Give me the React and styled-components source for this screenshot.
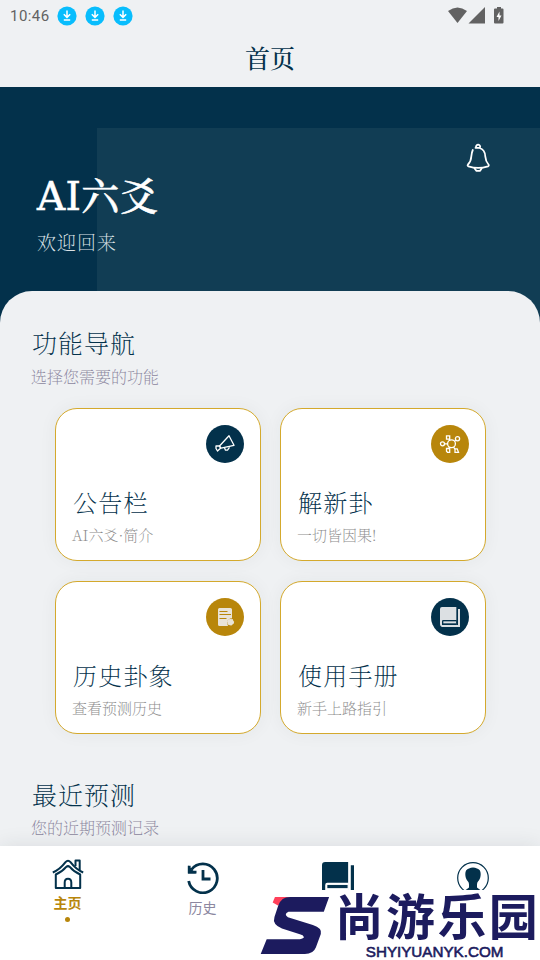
import React from "react";
import styled, { createGlobalStyle } from "styled-components";

const NAVY = "#03314b";
const GOLD = "#b8860b";

const GlobalStyle = createGlobalStyle`
  * {
    box-sizing: border-box;
  }

  body {
    margin: 0;
    background: #eff1f3;
    overflow: hidden;
  }
`;

const Screen = styled.div`
  position: relative;
  display: flex;
  flex-direction: column;
  width: 540px;
  height: 960px;
  overflow: hidden;
  background: #eff1f3;
  font-family: "Noto Serif CJK SC", "Noto Sans CJK SC", sans-serif;
  font-weight: 200;
  white-space: nowrap;
`;

const StatusBar = styled.div`
  display: flex;
  flex-shrink: 0;
  align-items: center;
  justify-content: space-between;
  height: 31px;
  padding: 0 34px 0 10px;
  color: #626262;
`;

const StatusGroup = styled.div`
  display: flex;
  align-items: center;
  gap: ${(props) => props.$gap}px;
`;

const Time = styled.span`
  width: 39px;
  font: 400 15px/18px Roboto, sans-serif;
  letter-spacing: 0.45px;
`;

const TitleBar = styled.header`
  flex-shrink: 0;
  height: 56px;
  color: ${NAVY};
  font-size: 25px;
  font-weight: 500;
  line-height: 52px;
  text-align: center;
`;

const Hero = styled.section`
  display: flex;
  flex-shrink: 0;
  height: 240px;
  padding: 41px 0 0 97px;
  background: ${NAVY};
`;

const HeroShade = styled.div`
  display: flex;
  flex: 1;
  justify-content: space-between;
  padding: 15px 48px 0 0;
  background: #113d54;
`;

const Welcome = styled.div`
  margin: 25px 0 0 -60px;
  color: #fff;
`;

const AppName = styled.h1`
  margin: 0;
  font-size: 38px;
  font-weight: 500;
  line-height: 52px;
  letter-spacing: 1px;
  -webkit-text-stroke: 0.6px #fff;
`;

const AppNameLatin = styled.span`
  font-family: "DejaVu Serif", serif;
  font-size: 39px;
  letter-spacing: 0.3px;
`;

const Greeting = styled.p`
  margin: 5px 0 0;
  color: #dbe2e6;
  font-size: 19px;
  line-height: 28px;
  letter-spacing: 1px;
`;

const Content = styled.main`
  flex: 1;
  min-height: 0;
  margin-top: -36px;
  padding-top: 33px;
  overflow: hidden;
  border-radius: 32px 32px 0 0;
  background: #eff1f3;
`;

const SectionHead = styled.div`
  padding-left: 32px;
`;

const SectionTitle = styled.h2`
  margin: 0;
  color: ${NAVY};
  font-size: 25px;
  font-weight: 200;
  line-height: 36px;
  letter-spacing: 1px;
`;

const SectionHint = styled.p`
  margin: ${(props) => (props.$tight ? 4 : 5)}px 0 0 -1px;
  color: #8c87a0;
  font-size: 16px;
  line-height: 24px;
`;

const CardGrid = styled.div`
  display: grid;
  grid-template-columns: 206px 206px;
  grid-auto-rows: 153px;
  gap: 20px 19px;
  padding: 19px 0 42px 55px;
`;

const Card = styled.article`
  display: flex;
  flex-direction: column;
  padding: 16px 16px 8px;
  border: 1px solid #d4a92d;
  border-radius: 22px;
  background: #fff;
  box-shadow: 0 0 18px rgba(40, 50, 60, 0.05);
`;

const Badge = styled.div`
  display: flex;
  align-items: center;
  justify-content: center;
  align-self: flex-end;
  width: 38px;
  height: 38px;
  border-radius: 50%;
  background: ${(props) => props.$color};
`;

const CardTitle = styled.h3`
  margin: 21px 0 0 1px;
  color: ${NAVY};
  font-size: 24px;
  font-weight: 200;
  line-height: 36px;
  letter-spacing: 1.2px;
`;

const CardHint = styled.p`
  margin: 3px 0 0;
  color: #8c8c8c;
  font-size: 15px;
  line-height: 23px;
`;

const TabBar = styled.nav`
  display: grid;
  flex-shrink: 0;
  grid-template-columns: repeat(4, 1fr);
  height: 114px;
  background: #fff;
  box-shadow: 0 0 20px rgba(30, 40, 50, 0.1);
  z-index: 1;
`;

const Tab = styled.div`
  display: flex;
  flex-direction: column;
  align-items: center;
  padding-top: ${(props) => (props.$active ? 13 : 16)}px;
  color: ${(props) => (props.$active ? GOLD : "#8c87a0")};
  font: ${(props) => (props.$active ? 700 : 400)} 14px/20px "Noto Sans CJK SC",
    sans-serif;
`;

const TabLabel = styled.span`
  margin-top: ${(props) => (props.$active ? 1 : 3)}px;
`;

const ActiveDot = styled.i`
  width: 5px;
  height: 5px;
  margin-top: 5px;
  border-radius: 50%;
  background: ${GOLD};
`;

/* site mark lying over the right half of the tab bar */
const SiteMark = styled.aside`
  position: absolute;
  right: 0;
  bottom: 0;
  z-index: 2;
  display: flex;
  width: 280px;
  height: 70px;
  background: #fff;
  color: #1c1b5e;
`;

const SiteText = styled.div`
  display: flex;
  flex-direction: column;
  margin-left: 5px;
`;

const SiteName = styled.strong`
  height: 53px;
  font: 700 49px/47px "Noto Sans CJK SC", sans-serif;
  letter-spacing: 2.3px;
`;

const SiteUrl = styled.span`
  margin-left: 31px;
  font: 400 15.2px/17px "Liberation Sans", sans-serif;
  -webkit-text-stroke: 0.6px #1c1b5e;
`;

const DownloadIcon = () => (
  <svg width="20" height="20" viewBox="0 0 20 20">
    <circle cx="10" cy="10" r="9.6" fill="#08bdfd" />
    <path d="M10 4.5v6M6.8 8.2l3.2 3.2 3.2-3.2M6.8 14h6.4" fill="none" stroke="#fff" strokeWidth="1.5" />
  </svg>
);

const SignalIcons = () => (
  <svg width="58" height="18" viewBox="0 0 58 18" fill="currentColor">
    <path d="M0 4Q9.500-3 19 4L9.500 16Z" />
    <path d="M37 0v16.500H20.500Z" />
    <path d="M49 0h4v1.500h1.500q1 0 1 1V15.500q0 1-1 1h-7.500q-1 0-1-1V2.500q0-1 1-1h2Z" />
    <path d="M51.500 4.500 48.500 10h2v4l3-5.500h-2Z" fill="#fff" />
  </svg>
);

const BellIcon = () => (
  <svg width="28" height="30" viewBox="0 0 28 30" fill="none" stroke="#fff" strokeWidth="1.8" strokeLinejoin="round" strokeLinecap="round">
    <path d="M8.800 7Q7.800 9 7.300 13.500 7 18.500 4 21.500q-1 1.300.5 1.900Q14 26.500 24 23.400q1.300-.6.500-1.900Q21.700 18.500 21.300 13.500 21 6.500 15.500 5M11.500 4.800h4.500" />
    <path d="M12 3.800a2.100 2.100 0 1 1 4.200 0M10.500 25.200l1.800 2.600h3.800l1.600-2.600" />
  </svg>
);

const MegaphoneIcon = () => (
  <svg width="22" height="20" viewBox="0 0 22 20" fill="none" stroke="#fff" strokeWidth="1.300" strokeLinejoin="round">
    <path d="M5.500 12 15 1.800l5 9.500-13 2.900Z" />
    <path d="M2 12h3.500l1 2.200-3 2.800-1.500-2.500ZM10.500 13.800l1 2.400h2l2-2.900" />
  </svg>
);

const NodesIcon = () => (
  <svg width="22" height="20" viewBox="0 0 22 20" fill="none" stroke="#fff" strokeWidth="1.300">
    <circle cx="12.500" cy="9.800" r="3.900" />
    <circle cx="3.500" cy="9.800" r="2" />
    <path d="M7.500 1.800h3.200v3.300H7.500ZM7.500 14.500h3.200v3.800H8.500l-1-1ZM16 14.800h2.200l1.300 3.500h-3.500Z" />
    <circle cx="18.500" cy="4.800" r="2.100" />
    <path d="M5.500 9.800h3M10.200 5.100l.6 1.400M15.500 7.200l1.500-1M10.500 13l-.6 1.500M14.500 13.200l1.500 2" />
  </svg>
);

const RecordIcon = () => (
  <svg width="20" height="20" viewBox="0 0 20 20">
    <path d="M3 2.500q0-1.500 1.500-1.500h11q1.500 0 1.500 1.500V11q-4.500.5-5 4.500l1 3.500H4.500q-1.500 0-1.500-1.500Z" fill="#e9e3d8" />
    <path d="M4.500 4.500h8M4.500 7.500H16M4.500 11.500h7" stroke={GOLD} strokeWidth="1.100" />
    <circle cx="15.500" cy="15" r="3.100" fill="#e9e3d8" stroke="#e9e3d8" strokeDasharray="2 1" />
  </svg>
);

const BookIcon = ({ size, color, gap }) => (
  <svg width={size} height={size} viewBox="0 0 30 30" fill={color}>
    <path d="M3 0H24.500V27H27V3H30V30H3Q0 29 0 26V3Q0 0 3 0Z" />
    <path d="M5 19.500H25V27H3V21.500Q3 19.500 5 19.500Z" fill={gap} />
    <path d="M5 21.500H24V24.500H5Z" />
  </svg>
);

const HomeIcon = () => (
  <svg width="32" height="32" viewBox="0 0 32 32" fill="none" stroke={NAVY} strokeWidth="2" strokeLinejoin="round">
    <path d="M.8 13.500Q8 10.500 13.500 3.200q2.500-2.800 5 0Q24 10.500 31.200 13.500" />
    <path d="M3.800 15.500Q10.500 12.500 14.200 7.900q1.800-1.600 3.600 0Q21.500 12.500 28.200 15.500V29H3.800Z" />
    <path d="M12.700 28.500V23.500q0-3.700 3.300-3.700t3.300 3.700v5M23.500 7V1.500h4.200V11" />
  </svg>
);

const HistoryIcon = () => (
  <svg width="32" height="32" viewBox="0 0 32 32" fill="none" stroke={NAVY} strokeWidth="2.800">
    <path d="M1.700 19A14.400 14.400 0 1 0 4.500 7.500" />
    <path d="M2.200 3.700V10.200H9.500M16 8V17H23.500" />
    <path d="M1 3.500v8h8Z" fill={NAVY} stroke="none" />
  </svg>
);

const ProfileIcon = () => (
  <svg width="32" height="32" viewBox="0 0 32 32">
    <circle cx="16" cy="16" r="15.300" fill="#fff" stroke={NAVY} strokeWidth="1.200" />
    <path d="M12 6.500q4-2 8 0 3.700.8 3.700 5.500 0 5-2.700 7.500-1 1-1 3v3l4 3q-8 3.500-16 0l4-3v-3q0-2-1-3-2.700-2.500-2.700-7.500 0-4.700 3.700-5.500Z" fill={NAVY} />
  </svg>
);

const SiteLogo = () => (
  <svg width="70" height="70" viewBox="0 0 70 70">
    <path d="M15 7H30L18 15.500 12.700 12.500Z" fill="#ff405a" />
    <path d="M30 7H69.300L64 21.700H28.500Q23.500 24 28 27.300L53 35Q62.500 38 61 44L56 57.500Q53.500 64 45 64H.7L6.700 49.300H40Q44 48.500 44 47 43.500 45 40 44.300L22 38.500Q12 34.500 14.500 27L18.300 15.500Q21.500 7 30 7Z" fill="#1c1b5e" />
  </svg>
);

const cards = [
  { title: "公告栏", hint: "AI六爻·简介", color: NAVY, icon: <MegaphoneIcon /> },
  { title: "解新卦", hint: "一切皆因果!", color: GOLD, icon: <NodesIcon /> },
  { title: "历史卦象", hint: "查看预测历史", color: GOLD, icon: <RecordIcon /> },
  {
    title: "使用手册",
    hint: "新手上路指引",
    color: NAVY,
    icon: <BookIcon size={20} color="#dce0e3" gap={NAVY} />,
  },
];

const tabs = [
  { label: "主页", icon: <HomeIcon />, active: true },
  { label: "历史", icon: <HistoryIcon /> },
  { icon: <BookIcon size={32} color={NAVY} gap="#fff" /> },
  { icon: <ProfileIcon /> },
];

const App = () => {
  return (
    <Screen>
      <GlobalStyle />
      <StatusBar>
        <StatusGroup $gap={8}>
          <Time>10:46</Time>
          <DownloadIcon />
          <DownloadIcon />
          <DownloadIcon />
        </StatusGroup>
        <SignalIcons />
      </StatusBar>
      <TitleBar>首页</TitleBar>
      <Hero>
        <HeroShade>
          <Welcome>
            <AppName>
              <AppNameLatin>AI</AppNameLatin>六爻
            </AppName>
            <Greeting>欢迎回来</Greeting>
          </Welcome>
          <BellIcon />
        </HeroShade>
      </Hero>
      <Content>
        <SectionHead>
          <SectionTitle>功能导航</SectionTitle>
          <SectionHint>选择您需要的功能</SectionHint>
        </SectionHead>
        <CardGrid>
          {cards.map((card) => (
            <Card key={card.title}>
              <Badge $color={card.color}>{card.icon}</Badge>
              <CardTitle>{card.title}</CardTitle>
              <CardHint>{card.hint}</CardHint>
            </Card>
          ))}
        </CardGrid>
        <SectionHead>
          <SectionTitle>最近预测</SectionTitle>
          <SectionHint $tight>您的近期预测记录</SectionHint>
        </SectionHead>
      </Content>
      <TabBar>
        {tabs.map((tab, index) => (
          <Tab key={index} $active={tab.active}>
            {tab.icon}
            {tab.label && <TabLabel $active={tab.active}>{tab.label}</TabLabel>}
            {tab.active && <ActiveDot />}
          </Tab>
        ))}
      </TabBar>
      <SiteMark>
        <SiteLogo />
        <SiteText>
          <SiteName>尚游乐园</SiteName>
          <SiteUrl>SHYIYUANYK.COM</SiteUrl>
        </SiteText>
      </SiteMark>
    </Screen>
  );
};

export default App;
